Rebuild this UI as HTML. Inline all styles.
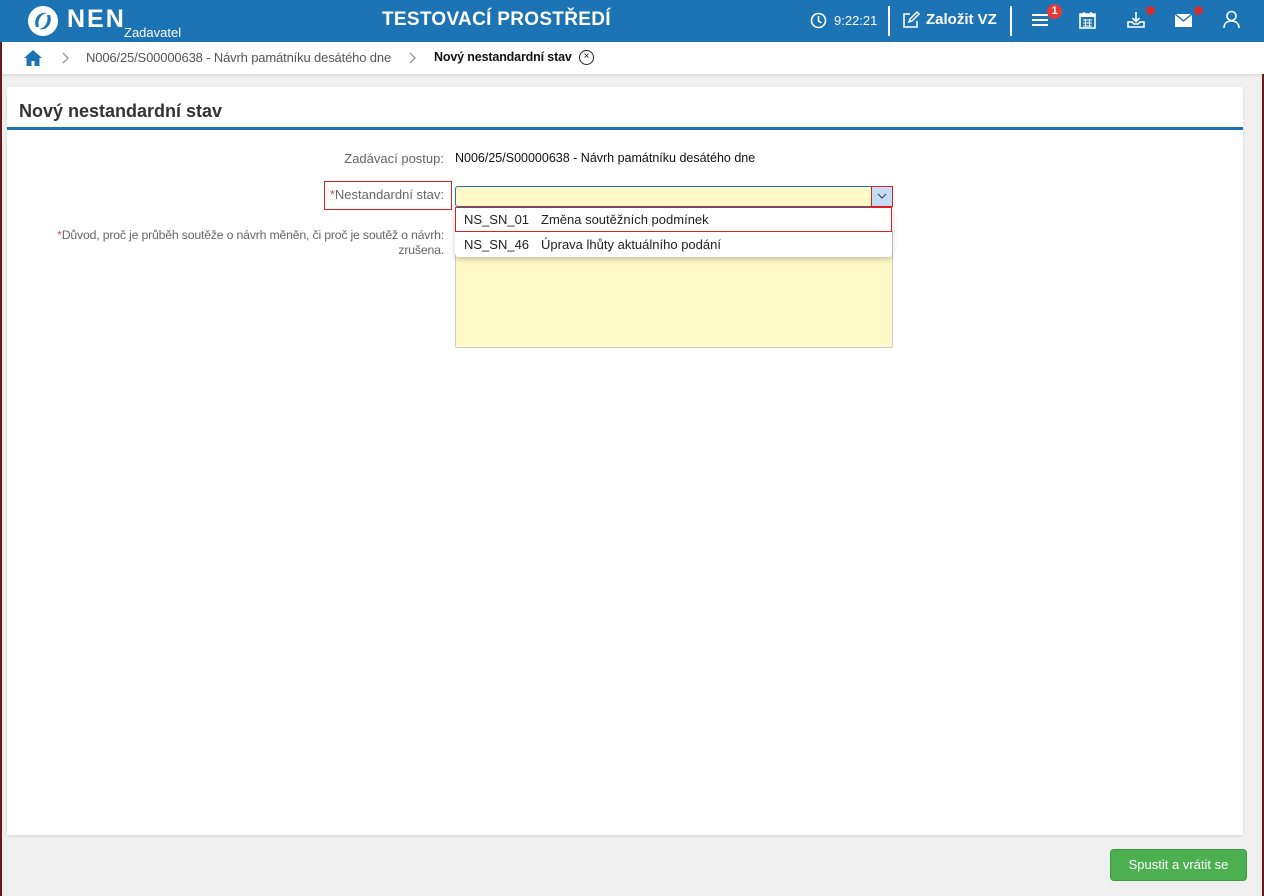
<!DOCTYPE html>
<html><head><meta charset="utf-8"><style>
*{box-sizing:border-box;margin:0;padding:0}
body{width:1264px;height:896px;background:#f0f0f0;font-family:"Liberation Sans",Arial,sans-serif;position:relative;overflow:hidden}
.hdr{position:absolute;left:0;top:0;width:1264px;height:42px;background:#1c74b4;color:#fff}
.bc{position:absolute;left:0;top:42px;width:1264px;height:32px;background:#fff;box-shadow:0 2px 3px rgba(0,0,0,.08);font-size:13px;letter-spacing:-.15px}
.abs{position:absolute;white-space:nowrap}
.card{position:absolute;left:7px;top:87px;width:1236px;height:748px;background:#fff;box-shadow:0 1px 3px rgba(0,0,0,.1)}
.lbl{position:absolute;font-size:13px;color:#666;text-align:right;white-space:nowrap}
.star{color:#d9534f}
</style></head><body>
<div class="hdr">
 <svg class="abs" style="left:27px;top:5px" width="32" height="32" viewBox="0 0 32 32"><circle cx="16" cy="16" r="15" fill="#fff"/><path d="M9 22 C6 14 12 6 20 8 C14 9 10 15 12 22Z" fill="#1c74b4"/><path d="M23 10 C26 18 20 26 12 24 C18 23 22 17 20 10Z" fill="#1c74b4"/></svg>
 <div class="abs" style="left:67px;top:5px;font-size:25px;font-weight:bold;letter-spacing:2px">NEN</div>
 <div class="abs" style="left:124px;top:25px;font-size:13px">Zadavatel</div>
 <div class="abs" style="left:382px;top:9px;font-size:19px;font-weight:bold;letter-spacing:.3px">TESTOVACÍ PROSTŘEDÍ</div>
 <svg class="abs" style="left:810px;top:12px" width="17" height="17" viewBox="0 0 17 17"><circle cx="8.5" cy="8.5" r="7" fill="none" stroke="#fff" stroke-width="1.6"/><path d="M8.5 4v5l3 2" fill="none" stroke="#fff" stroke-width="1.6"/></svg>
 <div class="abs" style="left:834px;top:13px;font-size:13px">9:22:21</div>
 <div class="abs" style="left:888px;top:6px;width:2px;height:30px;background:#fff"></div>
 <svg class="abs" style="left:902px;top:11px" width="18" height="18" viewBox="0 0 18 18"><path d="M8 3H2v13h13V10" fill="none" stroke="#fff" stroke-width="1.6"/><path d="M7 11l1-3 7-7 2 2-7 7z" fill="none" stroke="#fff" stroke-width="1.5"/></svg>
 <div class="abs" style="left:926px;top:11px;font-size:15px;font-weight:bold">Založit VZ</div>
 <div class="abs" style="left:1010px;top:6px;width:2px;height:30px;background:#fff"></div>
 <div class="abs" style="left:1032px;top:14px;width:16px;height:2px;background:#fff;box-shadow:0 5px 0 #fff,0 10px 0 #fff"></div>
 <div class="abs" style="left:1047px;top:4px;width:15px;height:15px;border-radius:50%;background:#e53935;font-size:11px;text-align:center;line-height:15px;font-weight:bold">1</div>
 <svg class="abs" style="left:1079px;top:11px" width="17" height="18" viewBox="0 0 17 18"><rect x="1" y="3" width="15" height="14" fill="none" stroke="#fff" stroke-width="1.6"/><rect x="1" y="3" width="15" height="3" fill="#fff"/><path d="M5 1v4M12 1v4" stroke="#fff" stroke-width="1.6"/><path d="M4 9h9M4 12h9M4 15h9M6.5 8v8M10.5 8v8" stroke="#fff" stroke-width="1"/></svg>
 <svg class="abs" style="left:1127px;top:11px" width="18" height="18" viewBox="0 0 18 18"><path d="M9 1v9M5.5 7l3.5 3.5L12.5 7" fill="none" stroke="#fff" stroke-width="1.6"/><path d="M1 11v5h16v-5h-4l-2 2H7l-2-2z" fill="none" stroke="#fff" stroke-width="1.6"/></svg>
 <div class="abs" style="left:1146px;top:6px;width:9px;height:9px;border-radius:50%;background:#d32f2f"></div>
 <div class="abs" style="left:1175px;top:14px;width:17px;height:13px;background:#fff"></div>
 <svg class="abs" style="left:1175px;top:14px" width="17" height="13"><path d="M0 0l8.5 7L17 0" fill="none" stroke="#1c74b4" stroke-width="1.4"/></svg>
 <div class="abs" style="left:1194px;top:6px;width:9px;height:9px;border-radius:50%;background:#d32f2f"></div>
 <svg class="abs" style="left:1223px;top:10px" width="17" height="19" viewBox="0 0 17 19"><circle cx="8.5" cy="6" r="4.5" fill="none" stroke="#fff" stroke-width="1.6"/><path d="M1 18c0-5 3.5-7 7.5-7s7.5 2 7.5 7" fill="none" stroke="#fff" stroke-width="1.6"/></svg>
</div>
<div class="bc">
 <svg class="abs" style="left:24px;top:8px" width="18" height="16" viewBox="0 0 18 16"><path d="M9 0L0 8h2.5v8h5v-5h3v5h5V8H18z" fill="#1c74b4"/></svg>
 <svg class="abs" style="left:62px;top:10px" width="8" height="12"><path d="M1 1l5 5-5 5" fill="none" stroke="#888" stroke-width="1.2"/></svg>
 <div class="abs" style="left:86px;top:8px;color:#555">N006/25/S00000638 - Návrh památníku desátého dne</div>
 <svg class="abs" style="left:409px;top:10px" width="8" height="12"><path d="M1 1l5 5-5 5" fill="none" stroke="#888" stroke-width="1.2"/></svg>
 <div class="abs" style="left:434px;top:8px;color:#111;font-weight:bold;font-size:12.5px">Nový nestandardní stav</div>
 <div class="abs" style="left:579px;top:8px;width:15px;height:15px;border:1.3px solid #222;border-radius:50%;font-size:10px;text-align:center;line-height:12px">×</div>
</div>
<div class="card">
 <div class="abs" style="left:12px;top:14px;font-size:18px;font-weight:bold;color:#333">Nový nestandardní stav</div>
 <div class="abs" style="left:0;top:40px;width:1236px;height:3px;background:#1c74b4"></div>
</div>
<div class="lbl" style="left:300px;width:144px;top:151px">Zadávací postup:</div>
<div class="abs" style="left:455px;top:151px;font-size:12.5px;color:#111">N006/25/S00000638 - Návrh památníku desátého dne</div>
<div class="abs" style="left:324px;top:181px;width:128px;height:29px;border:1px solid #e02020"></div>
<div class="lbl" style="left:300px;width:144px;top:187px"><span class="star">*</span>Nestandardní stav:</div>
<div class="lbl" style="left:20px;width:424px;top:228px;line-height:15px;font-size:12.3px;letter-spacing:-.2px"><span class="star">*</span>Důvod, proč je průběh soutěže o návrh měněn, či proč je soutěž o návrh:<br>zrušena.</div>
<div class="abs" style="left:455px;top:230px;width:438px;height:118px;background:#fffac8;border:1px solid #ccc;border-radius:2px"></div>
<div class="abs" style="left:455px;top:186px;width:438px;height:21px;background:#fffac8;border:1px solid #1c74b4;border-radius:3px"></div>
<div class="abs" style="left:871px;top:186px;width:22px;height:21px;background:#c5dcf5;border:1px solid #e02020"></div>
<svg class="abs" style="left:877px;top:193px" width="10" height="6"><path d="M1 1l4 4 4-4" fill="none" stroke="#335" stroke-width="1"/></svg>
<div class="abs" style="left:455px;top:207px;width:437px;height:50px;background:#fff;box-shadow:0 3px 6px rgba(0,0,0,.2);border-radius:0 0 4px 4px;font-size:13px;color:#222">
 <div class="abs" style="left:0;top:0;width:437px;height:25px;border:1px solid #e02020"></div>
 <div class="abs" style="left:9px;top:5px">NS_SN_01</div><div class="abs" style="left:86px;top:5px">Změna soutěžních podmínek</div>
 <div class="abs" style="left:9px;top:30px">NS_SN_46</div><div class="abs" style="left:86px;top:30px">Úprava lhůty aktuálního podání</div>
</div>
<div class="abs" style="left:1110px;top:849px;width:137px;height:32px;background:#4caf50;border:1px solid #3e9a42;border-radius:4px;color:#fff;font-size:13px;text-align:center;line-height:30px">Spustit a vrátit se</div>
<div class="abs" style="left:0;top:42px;width:2px;height:854px;background:#6b1a1a"></div>
<div class="abs" style="left:1262px;top:74px;width:2px;height:822px;background:#6b1a1a"></div>
</body></html>
